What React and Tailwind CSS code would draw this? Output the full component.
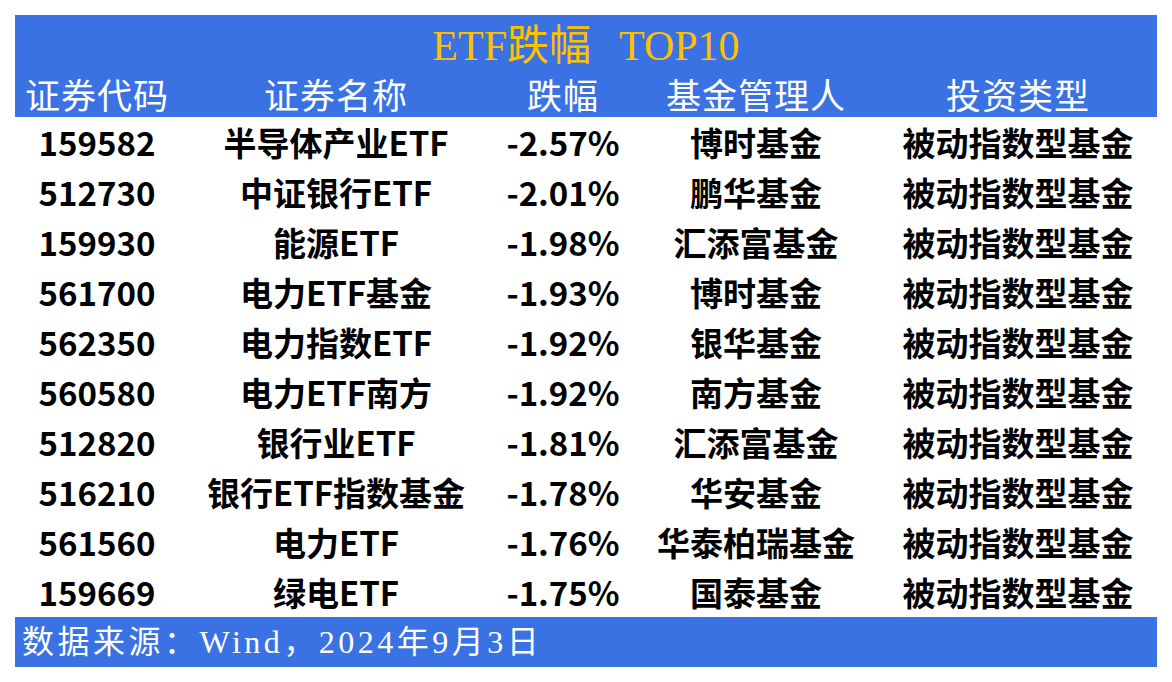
import React from 'react';

const rows = [
  ['159582', '半导体产业ETF', '-2.57%', '博时基金', '被动指数型基金'],
  ['512730', '中证银行ETF', '-2.01%', '鹏华基金', '被动指数型基金'],
  ['159930', '能源ETF', '-1.98%', '汇添富基金', '被动指数型基金'],
  ['561700', '电力ETF基金', '-1.93%', '博时基金', '被动指数型基金'],
  ['562350', '电力指数ETF', '-1.92%', '银华基金', '被动指数型基金'],
  ['560580', '电力ETF南方', '-1.92%', '南方基金', '被动指数型基金'],
  ['512820', '银行业ETF', '-1.81%', '汇添富基金', '被动指数型基金'],
  ['516210', '银行ETF指数基金', '-1.78%', '华安基金', '被动指数型基金'],
  ['561560', '电力ETF', '-1.76%', '华泰柏瑞基金', '被动指数型基金'],
  ['159669', '绿电ETF', '-1.75%', '国泰基金', '被动指数型基金'],
];

const headers = ['证券代码', '证券名称', '跌幅', '基金管理人', '投资类型'];

const cols = 'grid grid-cols-[164px_314px_140px_246px_278px]';

export default function App() {
  return (
    <div className="w-[1172px] h-[682px] bg-white p-[15px]">
      {/* header band */}
      <div className="h-[102px] bg-[#3a72e3] flex flex-col">
        <div className="h-[60px] flex items-center justify-center pt-[2px] text-[42px] leading-none text-[#ffc000] font-['Liberation_Serif','Noto_Sans_CJK_SC',serif]">
          <span>ETF跌幅</span>
          <span className="ml-[28px]">TOP10</span>
        </div>
        <div className={`${cols} h-[42px] items-start text-white text-[35px] leading-[38px] font-['Noto_Sans_CJK_SC',sans-serif]`}>
          {headers.map((h) => (
            <div key={h} className="text-center tracking-[1px]">{h}</div>
          ))}
        </div>
      </div>

      {/* rows */}
      <div className="font-['Noto_Sans_CJK_SC',sans-serif] font-bold text-black text-[33px] leading-none">
        {rows.map((r) => (
          <div key={r[0] + r[1]} className={`${cols} h-[50px] items-center`}>
            {r.map((c, i) => (
              <div key={i} className="text-center">{c}</div>
            ))}
          </div>
        ))}
      </div>

      {/* source footer */}
      <div className="h-[50px] bg-[#3a72e3] flex items-center pl-[7px] text-white text-[32px] leading-none tracking-[3.5px] font-['Liberation_Serif','Noto_Sans_CJK_SC',serif]">
        数据来源：Wind，2024年9月3日
      </div>
    </div>
  );
}
